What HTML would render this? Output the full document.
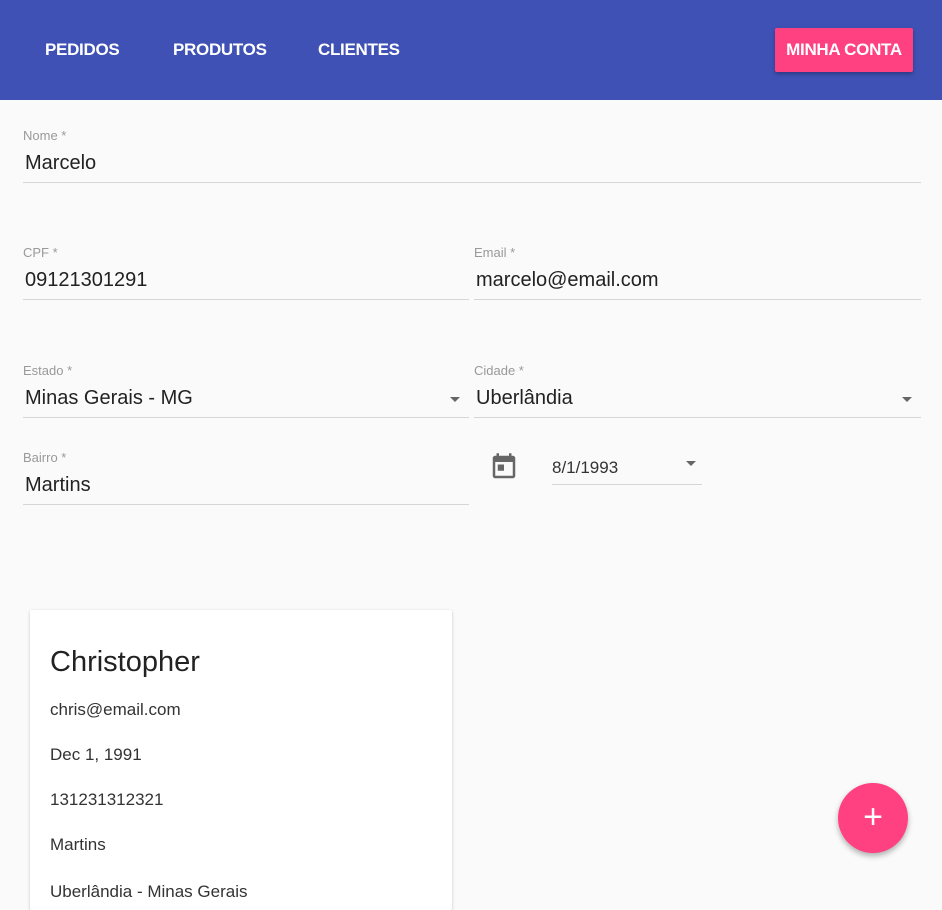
<!DOCTYPE html>
<html><head><meta charset="utf-8"><style>
*{margin:0;padding:0;box-sizing:border-box}
body{width:942px;height:885px;overflow:hidden;background:#fafafa;font-family:"Liberation Sans",Arial,sans-serif;position:relative}
.hdr{position:absolute;left:0;top:0;width:942px;height:100px;background:#3f51b5}
.nav{position:absolute;top:40px;color:#fff;font-size:17px;line-height:20px;font-weight:bold;letter-spacing:-0.3px}
.btn{position:absolute;left:775px;top:28px;width:138px;height:44px;background:#ff4081;color:#fff;font-size:17px;font-weight:bold;letter-spacing:-0.3px;line-height:44px;text-align:center;border-radius:2px;box-shadow:0 2px 4px rgba(0,0,0,.3)}
.f{position:absolute;border-bottom:1px solid #d6d6d6}
.lab{position:absolute;left:0;font-size:13px;color:#999;top:0}
.val{position:absolute;left:2px;font-size:20px;color:#222;top:24px}
.arr{position:absolute;right:9px;width:0;height:0;border-left:5px solid transparent;border-right:5px solid transparent;border-top:5px solid #666}
.card{position:absolute;left:30px;top:610px;width:422px;height:300px;background:#fff;box-shadow:0 1px 3px rgba(0,0,0,.2);border-radius:2px}
.card p{position:absolute;left:20px;font-size:17px;color:#333}
.fab{position:absolute;left:838px;top:783px;width:70px;height:70px;border-radius:50%;background:#ff4081;box-shadow:0 3px 6px rgba(0,0,0,.3);color:#fff;font-size:34px;line-height:68px;text-align:center}
</style></head><body>
<div class="hdr">
<div class="nav" style="left:45px">PEDIDOS</div>
<div class="nav" style="left:173px">PRODUTOS</div>
<div class="nav" style="left:318px">CLIENTES</div>
<div class="btn">MINHA CONTA</div>
</div>
<div class="f" style="left:23px;top:128px;width:898px;height:55px"><div class="lab">Nome *</div><div class="val">Marcelo</div></div>
<div class="f" style="left:23px;top:245px;width:446px;height:55px"><div class="lab">CPF *</div><div class="val">09121301291</div></div>
<div class="f" style="left:474px;top:245px;width:447px;height:55px"><div class="lab">Email *</div><div class="val">marcelo@email.com</div></div>
<div class="f" style="left:23px;top:363px;width:446px;height:55px"><div class="lab">Estado *</div><div class="val">Minas Gerais - MG</div><div class="arr" style="top:34px"></div></div>
<div class="f" style="left:474px;top:363px;width:447px;height:55px"><div class="lab">Cidade *</div><div class="val">Uberlândia</div><div class="arr" style="top:34px"></div></div>
<div class="f" style="left:23px;top:450px;width:446px;height:55px"><div class="lab">Bairro *</div><div class="val">Martins</div></div>
<svg style="position:absolute;left:489px;top:452px" width="30" height="30" viewBox="0 0 24 24"><path fill="#666" d="M12 10H7v5h5v-5zM16 1v2H8V1H6v2H5c-1.11 0-2 .9-2 2v14c0 1.1.89 2 2 2h14c1.1 0 2-.9 2-2V5c0-1.1-.9-2-2-2h-1V1h-2zm3 18H5V8h14v11z"/></svg>
<div class="f" style="left:552px;top:455px;width:150px;height:30px"><div style="position:absolute;left:0;top:3px;font-size:17px;color:#333">8/1/1993</div><div class="arr" style="top:6px;right:6px"></div></div>
<div class="card">
<p style="top:36px;font-size:29px;color:#222">Christopher</p>
<p style="top:90px">chris@email.com</p>
<p style="top:135px">Dec 1, 1991</p>
<p style="top:180px">131231312321</p>
<p style="top:225px">Martins</p>
<p style="top:272px">Uberlândia - Minas Gerais</p>
</div>
<div class="fab">+</div>
</body></html>
